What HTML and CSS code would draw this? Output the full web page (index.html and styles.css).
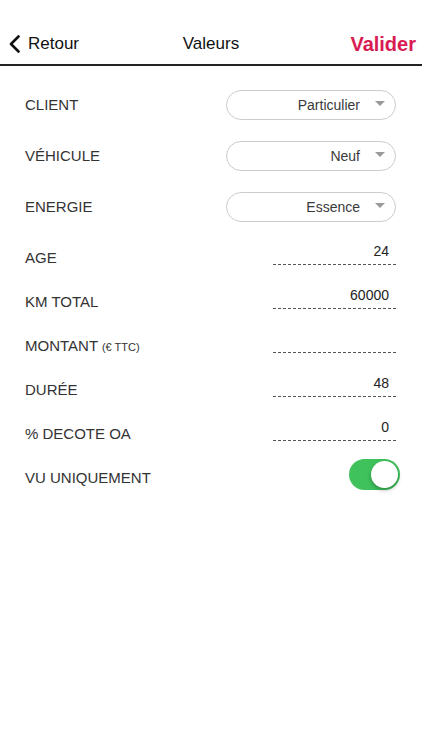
FILE: index.html
```html
<!DOCTYPE html>
<html lang="fr">
<head>
    <meta charset="UTF-8">
    <meta name="viewport" content="width=device-width, initial-scale=1.0">
    <title>Valeurs</title>
    <link rel="stylesheet" href="styles.css">
</head>
<body>
    <!-- Navigation -->
    <div class="navbar">
        <div class="nav-back">
            <svg width="13" height="18" viewBox="0 0 13 18">
                <path d="M10.5 1.5 L3 9 L10.5 16.5" fill="none" stroke="#111" stroke-width="2.6" stroke-linecap="round" stroke-linejoin="round"/>
            </svg>
            <span>Retour</span>
        </div>
        <div class="nav-title">Valeurs</div>
        <div class="nav-action">Valider</div>
    </div>

    <div class="form">
        <div class="row row-select">
            <span class="label">CLIENT</span>
            <div class="select"><span>Particulier</span><i class="caret"></i></div>
        </div>
        <div class="row row-select">
            <span class="label">VÉHICULE</span>
            <div class="select"><span>Neuf</span><i class="caret"></i></div>
        </div>
        <div class="row row-select">
            <span class="label">ENERGIE</span>
            <div class="select"><span>Essence</span><i class="caret"></i></div>
        </div>

        <div class="row row-input">
            <span class="label">AGE</span>
            <div class="field">24</div>
        </div>
        <div class="row row-input">
            <span class="label">KM TOTAL</span>
            <div class="field">60000</div>
        </div>
        <div class="row row-input">
            <span class="label">MONTANT <small>(€ TTC)</small></span>
            <div class="field"></div>
        </div>
        <div class="row row-input">
            <span class="label">DURÉE</span>
            <div class="field">48</div>
        </div>
        <div class="row row-input">
            <span class="label">% DECOTE OA</span>
            <div class="field">0</div>
        </div>

        <div class="row row-toggle">
            <span class="label">VU UNIQUEMENT</span>
            <div class="toggle on"><i class="knob"></i></div>
        </div>
    </div>
</body>
</html>
```

FILE: styles.css
```css
* {
    margin: 0;
    padding: 0;
    box-sizing: border-box;
}

body {
    font-family: 'Liberation Sans', Arial, sans-serif;
    background: #fff;
    color: #333;
    width: 422px;
    height: 750px;
    overflow: hidden;
}

.navbar {
    margin-top: 22px;
    height: 44px;
    border-bottom: 2px solid #222;
    display: flex;
    align-items: center;
    justify-content: space-between;
    padding: 2px 6px 0 8px;
    position: relative;
}

.nav-back {
    display: flex;
    align-items: center;
    gap: 7px;
    font-size: 17px;
    color: #111;
}

.nav-title {
    position: absolute;
    left: 0;
    right: 0;
    text-align: center;
    font-size: 17px;
    color: #111;
    pointer-events: none;
}

.nav-action {
    font-size: 20px;
    font-weight: bold;
    color: #d81b52;
}

.form {
    padding: 13px 22px 0 25px;
}

.row {
    display: flex;
    align-items: center;
    justify-content: space-between;
}

.label {
    font-size: 15px;
    color: #333;
}

.label small {
    font-size: 11px;
}

.row-select {
    height: 51px;
}

.select {
    width: 170px;
    height: 30px;
    border: 1px solid #ccc;
    border-radius: 15px;
    display: flex;
    align-items: center;
    justify-content: flex-end;
    padding-right: 10px;
    font-size: 14px;
    color: #3a3a3a;
    margin-left: auto;
    margin-right: 4px;
}

.caret {
    width: 0;
    height: 0;
    border-left: 5px solid transparent;
    border-right: 5px solid transparent;
    border-top: 5px solid #9a9a9a;
    margin-left: 15px;
    margin-top: -2px;
}

.row:nth-child(3) {
    margin-bottom: 3px;
}

.row-input {
    height: 44px;
}

.field {
    width: 123px;
    height: 22px;
    margin-bottom: 6px;
    margin-right: 4px;
    padding-right: 7px;
    text-align: right;
    font-size: 14px;
    line-height: 16px;
    color: #222;
    background-image: repeating-linear-gradient(to right, #555 0 3px, transparent 3px 5px);
    background-size: 100% 1px;
    background-repeat: no-repeat;
    background-position: bottom left;
}

.row-toggle {
    height: 44px;
}

.toggle {
    width: 51px;
    height: 31px;
    border-radius: 16px;
    background: #3fc25c;
    position: relative;
    margin-bottom: 5px;
}

.knob {
    position: absolute;
    top: 2px;
    right: 2px;
    width: 27px;
    height: 27px;
    border-radius: 50%;
    background: #fff;
    box-shadow: 0 2px 4px rgba(0, 0, 0, 0.3);
}
```
